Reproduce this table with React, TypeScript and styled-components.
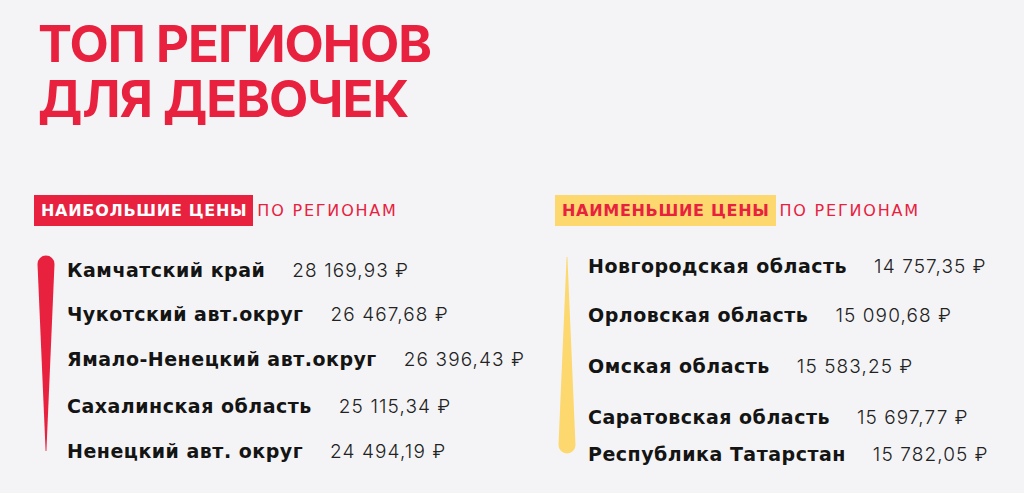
import React from "react";
import styled, { createGlobalStyle } from "styled-components";

const Global = createGlobalStyle`
  html, body {
    margin: 0;
    padding: 0;
    background: #f4f4f6;
  }
  body {
    font-family: "DejaVu Sans", Inter, sans-serif;
  }
`;

const RED = "#e8213f";
const YELLOW = "#fcd86f";

interface Row {
  name: string;
  price: string;
  offset: number;
}

const top: Row[] = [
  { name: "Камчатский край", price: "28 169,93 ₽", offset: 0 },
  { name: "Чукотский авт.округ", price: "26 467,68 ₽", offset: 19 },
  { name: "Ямало-Ненецкий авт.округ", price: "26 396,43 ₽", offset: 20 },
  { name: "Сахалинская область", price: "25 115,34 ₽", offset: 22 },
  { name: "Ненецкий авт. округ", price: "24 494,19 ₽", offset: 20 },
];

const bottom: Row[] = [
  { name: "Новгородская область", price: "14 757,35 ₽", offset: 0 },
  { name: "Орловская область", price: "15 090,68 ₽", offset: 24 },
  { name: "Омская область", price: "15 583,25 ₽", offset: 26 },
  { name: "Саратовская область", price: "15 697,77 ₽", offset: 26 },
  { name: "Республика Татарстан", price: "15 782,05 ₽", offset: 12 },
];

const Page = styled.div`
  width: 1024px;
  height: 493px;
  overflow: hidden;
  padding: 16px 0 0 0;
  box-sizing: border-box;
`;

const Title = styled.h1`
  margin: 0 0 0 38px;
  font-family: Inter, sans-serif;
  font-size: 51px;
  line-height: 55px;
  font-weight: 700;
  color: ${RED};
  letter-spacing: -1px;
`;

const Columns = styled.div`
  display: grid;
  grid-template-columns: 521px 1fr;
  margin: 69px 0 0 34px;
`;

const Column = styled.section``;

const Label = styled.div`
  display: flex;
  align-items: center;
  height: 31px;
  font-size: 16px;
`;

const Mark = styled.span<{ $bg: string }>`
  display: flex;
  align-items: center;
  height: 100%;
  padding: 0 6px 0 7px;
  background: ${(p) => p.$bg};
  color: ${(p) => (p.$bg === RED ? "#fff" : RED)};
  font-weight: 700;
  letter-spacing: 0.7px;
`;

const Rest = styled.span`
  margin-left: 4px;
  color: ${RED};
  font-weight: 400;
  letter-spacing: 1.8px;
`;

const Body = styled.div`
  display: flex;
  gap: 12px;
  margin-top: 29px;
`;

const Drop = styled.svg`
  flex: none;
  margin-left: 3px;
`;

const List = styled.ul<{ $shift: number }>`
  list-style: none;
  margin: ${(p) => p.$shift}px 0 0 0;
  padding: 0;
`;

const Item = styled.li<{ $offset: number }>`
  display: flex;
  align-items: baseline;
  gap: 27px;
  margin-top: ${(p) => p.$offset}px;
  line-height: 24px;
  white-space: nowrap;
`;

const Name = styled.span`
  font-size: 19px;
  font-weight: 700;
  letter-spacing: 0.5px;
  color: #141414;
`;

const Price = styled.span`
  font-family: Inter, sans-serif;
  font-size: 19px;
  font-weight: 300;
  letter-spacing: 1.1px;
  color: #222;
`;

const RedDrop = () => (
  <Drop width="18" height="200" viewBox="0 0 18 200">
    <path d="M0.5 9 A8.5 8.5 0 0 1 17.5 9 L9.4 196 L8.6 196 Z" fill={RED} />
  </Drop>
);

const YellowDrop = () => (
  <Drop width="18" height="200" viewBox="0 0 18 200">
    <path d="M8.6 2 L9.4 2 L17.5 190 A8.5 8.5 0 0 1 0.5 190 Z" fill={YELLOW} />
  </Drop>
);

const Rows: React.FC<{ rows: Row[] }> = ({ rows }) => (
  <>
    {rows.map((r) => (
      <Item key={r.name} $offset={r.offset}>
        <Name>{r.name}</Name>
        <Price>{r.price}</Price>
      </Item>
    ))}
  </>
);

export default function App() {
  return (
    <Page>
      <Global />
      <Title>
        ТОП РЕГИОНОВ
        <br />
        ДЛЯ ДЕВОЧЕК
      </Title>
      <Columns>
        <Column>
          <Label>
            <Mark $bg={RED}>НАИБОЛЬШИЕ ЦЕНЫ</Mark>
            <Rest>ПО РЕГИОНАМ</Rest>
          </Label>
          <Body>
            <RedDrop />
            <List $shift={3}>
              <Rows rows={top} />
            </List>
          </Body>
        </Column>
        <Column>
          <Label>
            <Mark $bg={YELLOW}>НАИМЕНЬШИЕ ЦЕНЫ</Mark>
            <Rest>ПО РЕГИОНАМ</Rest>
          </Label>
          <Body>
            <YellowDrop />
            <List $shift={-1}>
              <Rows rows={bottom} />
            </List>
          </Body>
        </Column>
      </Columns>
    </Page>
  );
}
